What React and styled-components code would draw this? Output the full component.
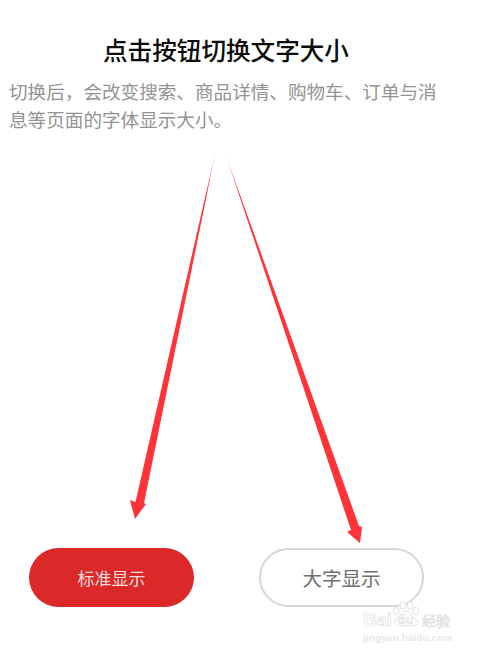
import React from "react";
import styled, { createGlobalStyle } from "styled-components";

const GlobalStyle = createGlobalStyle`
  html, body {
    margin: 0;
    padding: 0;
    background: #ffffff;
  }
  body {
    font-family: "Noto Sans CJK SC", "Noto Sans", sans-serif;
  }
`;

const Page = styled.div`
  position: relative;
  width: 480px;
  height: 653px;
  overflow: hidden;
  display: flex;
  flex-direction: column;
  background: #ffffff;
`;

const Title = styled.h1`
  margin: 31px 0 0;
  padding-right: 28px;
  text-align: center;
  font-size: 24.6px;
  line-height: 36px;
  font-weight: 500;
  color: #0c0c0c;
`;

const Description = styled.p`
  margin: 10px 0 0;
  padding: 0 36px 0 9px;
  font-size: 18.6px;
  line-height: 28px;
  font-weight: 400;
  color: #939393;
`;

const Buttons = styled.div`
  margin-top: auto;
  margin-bottom: 46px;
  padding: 0 56px 0 29px;
  display: flex;
  justify-content: space-between;
`;

const ModeButton = styled.button`
  width: 165px;
  height: 59px;
  box-sizing: border-box;
  border-radius: 30px;
  padding: 0;
  font-family: inherit;
  font-weight: 400;
  font-size: ${(p) => (p.$primary ? "17px" : "19.5px")};
  color: ${(p) => (p.$primary ? "#f6dcdc" : "#6f6f6f")};
  background: ${(p) => (p.$primary ? "#db2828" : "#ffffff")};
  border: ${(p) => (p.$primary ? "none" : "2px solid #d6d6d6")};
`;

const Arrows = styled.svg`
  position: absolute;
  left: 0;
  top: 0;
  pointer-events: none;
`;

const Watermark = styled.div`
  position: absolute;
  left: 363px;
  top: 600px;
  width: 96px;
  color: #ffffff;
  -webkit-text-stroke: 0.7px #dedede;
`;

const Paw = styled.svg`
  position: absolute;
  left: 30px;
  top: 0;
`;

const BrandRow = styled.div`
  position: relative;
  display: flex;
  align-items: center;
  margin-top: 12px;
  height: 16px;
  font-family: "Liberation Sans", sans-serif;
  font-size: 18.6px;
  font-weight: 700;
  line-height: 16px;
`;

const DuBadge = styled.span`
  width: 25px;
  margin: 0 4px 0 1px;
  text-align: center;
  font-size: 13px;
  color: #ffffff;
`;

const BrandCn = styled.span`
  font-family: "Noto Sans CJK SC", sans-serif;
  font-size: 14px;
  font-weight: 400;
`;

const Domain = styled.div`
  margin-top: 4px;
  font-family: "Liberation Sans", sans-serif;
  font-size: 9.8px;
  font-weight: 700;
  letter-spacing: 0.2px;
  color: #e6e6e6;
  -webkit-text-stroke: 0;
  white-space: nowrap;
`;

const App = () => {
  return (
    <Page>
      <GlobalStyle />
      <Title>点击按钮切换文字大小</Title>
      <Description>
        切换后，会改变搜索、商品详情、购物车、订单与消息等页面的字体显示大小。
      </Description>
      <Buttons>
        <ModeButton $primary>标准显示</ModeButton>
        <ModeButton>大字显示</ModeButton>
      </Buttons>

      <Arrows width="480" height="653" viewBox="0 0 480 653">
        <defs>
          <linearGradient id="fadeLeft" gradientUnits="userSpaceOnUse" x1="217" y1="145" x2="206" y2="195">
            <stop offset="0" stopColor="#ff3338" stopOpacity="0.05" />
            <stop offset="1" stopColor="#ff3338" />
          </linearGradient>
          <linearGradient id="fadeRight" gradientUnits="userSpaceOnUse" x1="225" y1="153" x2="240" y2="195">
            <stop offset="0" stopColor="#ff3338" stopOpacity="0.2" />
            <stop offset="1" stopColor="#ff3338" />
          </linearGradient>
        </defs>
        <path d="M217 145 L144 503 L146 504 L135 519 L130 500 L135.5 502 Z" fill="url(#fadeLeft)" />
        <path d="M225 153 L359 526 L362 527 L360 543 L347 532 L351 530 Z" fill="url(#fadeRight)" />
      </Arrows>

      <Watermark>
        <Paw width="26" height="27" viewBox="2 0 32 32">
          <g fill="#ffffff" stroke="#dedede" strokeWidth="1.2">
            <ellipse cx="6" cy="13" rx="3.5" ry="4.5" />
            <ellipse cx="14" cy="6" rx="3.5" ry="4.5" />
            <ellipse cx="23" cy="6" rx="3.5" ry="4.5" />
            <ellipse cx="30" cy="13" rx="3.5" ry="4.5" />
            <path d="M18 13 C12 13 12 20 6 23 C1 26 4 31 10 31 L27 31 C33 31 35 26 30 23 C24 20 24 13 18 13 Z" />
          </g>
        </Paw>
        <BrandRow>
          Bai
          <DuBadge>du</DuBadge>
          <BrandCn>经验</BrandCn>
        </BrandRow>
        <Domain>jingyan.baidu.com</Domain>
      </Watermark>
    </Page>
  );
};

export default App;
